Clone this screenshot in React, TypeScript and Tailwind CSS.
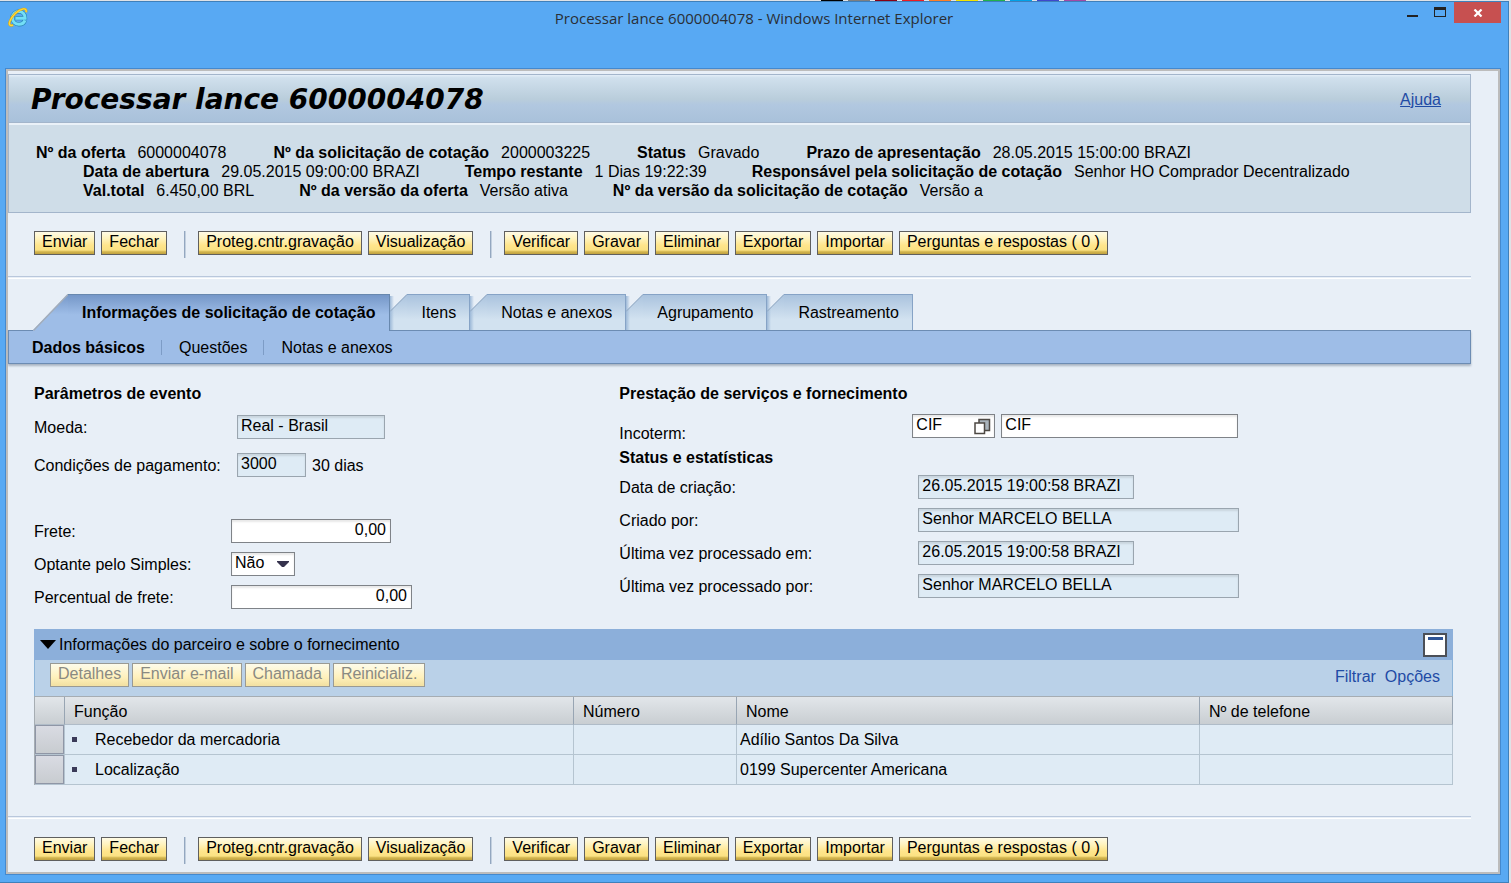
import { useState, type ReactNode } from 'react'
import clsx from 'clsx'

type InfoItem = { label: string; value: string }

const INFO_ROWS: InfoItem[][] = [
  [
    { label: 'Nº da oferta', value: '6000004078' },
    { label: 'Nº da solicitação de cotação', value: '2000003225' },
    { label: 'Status', value: 'Gravado' },
    { label: 'Prazo de apresentação', value: '28.05.2015 15:00:00 BRAZI' },
  ],
  [
    { label: 'Data de abertura', value: '29.05.2015 09:00:00 BRAZI' },
    { label: 'Tempo restante', value: '1 Dias 19:22:39' },
    { label: 'Responsável pela solicitação de cotação', value: 'Senhor HO Comprador Decentralizado' },
  ],
  [
    { label: 'Val.total', value: '6.450,00 BRL' },
    { label: 'Nº da versão da oferta', value: 'Versão ativa' },
    { label: 'Nº da versão da solicitação de cotação', value: 'Versão a' },
  ],
]

const ACTION_GROUPS = [
  ['Enviar', 'Fechar'],
  ['Proteg.cntr.gravação', 'Visualização'],
  ['Verificar', 'Gravar', 'Eliminar', 'Exportar', 'Importar', 'Perguntas e respostas ( 0 )'],
]

const TABS = ['Itens', 'Notas e anexos', 'Agrupamento', 'Rastreamento']
const SUB_TABS = ['Dados básicos', 'Questões', 'Notas e anexos']

const PARTNERS = [
  { role: 'Recebedor da mercadoria', name: 'Adílio Santos Da Silva' },
  { role: 'Localização', name: '0199 Supercenter Americana' },
]

const SWATCHES = [
  'bg-black',
  'bg-[#7f7f7f]',
  'bg-[#880015]',
  'bg-[#ed1c24]',
  'bg-[#ff7f27]',
  'bg-[#f5e500]',
  'bg-[#22b14c]',
  'bg-[#00a2e8]',
  'bg-[#3f48cc]',
  'bg-[#a349a4]',
]

function IeLogo() {
  return (
    <svg width="20" height="20" viewBox="0 0 20 20" fill="none" aria-hidden="true">
      <path d="M17 13.400c-1 2.500-3.200 3.900-6 3.900-3.900 0-6.600-2.600-6.600-6.300s2.700-6.400 6.600-6.400c3.800 0 6.200 2.600 6.100 6.600H7.500" stroke="#2b86b4" strokeWidth="4.200" />
      <path d="M17 13.400c-1 2.500-3.200 3.900-6 3.900-3.900 0-6.600-2.600-6.600-6.300s2.700-6.400 6.600-6.400c3.800 0 6.200 2.600 6.100 6.600H7.500" stroke="#74def6" strokeWidth="3" />
      <path d="M18 5.200c.7-2.300-.4-3.700-2.700-3.300C10 2.800 3.800 8.800 1.700 14.600c-1 3 .2 4.700 3.500 3.500" stroke="#d9a514" strokeWidth="2.400" />
      <path d="M18 5.200c.7-2.300-.4-3.700-2.700-3.300C10 2.800 3.800 8.800 1.700 14.600c-1 3 .2 4.700 3.500 3.500" stroke="#fbd83a" strokeWidth="1.400" />
    </svg>
  )
}

function TitleBar() {
  return (
    <header className="grid h-[66px] grid-cols-[1fr_auto_1fr] items-start">
      <div className="pt-[5px] pl-2">
        <IeLogo />
      </div>
      <div className="pt-[6px] font-['Open_Sans',sans-serif] text-[15px] leading-5 text-[#2a2f36]">
        Processar lance 6000004078 - Windows Internet Explorer
      </div>
      <div className="flex items-start justify-end pr-[7px]">
        <button aria-label="Minimizar" className="flex h-5 w-7 items-center justify-center">
          <svg width="12" height="12" viewBox="0 0 12 12">
            <path d="M1 9h11v2H1z" fill="#222" />
          </svg>
        </button>
        <button aria-label="Maximizar" className="flex h-5 w-7 items-center justify-center">
          <svg width="12" height="10" viewBox="0 0 12 10">
            <path d="M0 0h12v10H0zM1 3v6h10V3z" fill="#222" fillRule="evenodd" />
          </svg>
        </button>
        <button aria-label="Fechar janela" className="flex h-[21px] w-[47px] items-center justify-center bg-[#c75050]">
          <svg width="10" height="8" viewBox="0 0 10 8">
            <path d="M1.500 .5l7 7M8.500 .5l-7 7" stroke="#fff" strokeWidth="2.200" />
          </svg>
        </button>
      </div>
    </header>
  )
}

function ActionButton({ children, disabled }: { children: ReactNode; disabled?: boolean }) {
  return (
    <button
      disabled={disabled}
      className={clsx(
        'h-6 border px-[7px] pb-[2px] leading-4 whitespace-nowrap',
        disabled
          ? 'border-[#999a94] bg-linear-to-b from-[#fdfbea] from-0% via-[#fff1bc] via-60% to-[#f3e2a4] to-95% text-[#8a8a82]'
          : 'border-[#5f5f5f] bg-[linear-gradient(to_bottom,#fffbe6_0%,#fff3bd_30%,#ffe58c_60%,#fbe283_82%,#d2b44e_90%,#c0a240_100%)] text-black',
      )}
    >
      {children}
    </button>
  )
}

function ActionBar() {
  return (
    <div className="flex items-start pt-[18px] pl-[26px]">
      {ACTION_GROUPS.map((group, i) => (
        <div key={group[0]} className="flex items-start">
          {i > 0 && <span className="mr-3 ml-[17px] h-[27px] w-[2px] border-l border-[#93a7c0] bg-[#c3d0df]" />}
          <div className="flex gap-[6px]">
            {group.map((label) => (
              <ActionButton key={label}>{label}</ActionButton>
            ))}
          </div>
        </div>
      ))}
    </div>
  )
}

function Divider() {
  return <div className="h-[3px] border-t border-b border-t-[#b9c7dc] border-b-white" />
}

function PageHeader() {
  return (
    <section className="border border-[#a3b5cb]">
      <div className="flex h-12 items-center justify-between border-b border-[#a3b5cb] bg-[linear-gradient(to_bottom,#e3eef8_0%,#d0e0ed_6%,#b9cddb_52%,#b2c8e0_62%,#a9c1da_100%)] pt-[3px] pr-[29px] pl-[22px]">
        <h1 className="font-['DejaVu_Sans',Verdana,sans-serif] text-[28px] leading-9 font-bold italic">
          Processar lance 6000004078
        </h1>
        <a href="#ajuda" className="text-[#1f4ba5] underline">
          Ajuda
        </a>
      </div>
      <div className="border-t-2 border-[#eaf1f8] bg-[#cfdde8] pt-[18px] pb-3 pl-[27px] leading-[19px]">
        {INFO_ROWS.map((row, i) => (
          <dl key={row[0].label} className={clsx('flex', i === 0 ? 'gap-[47px]' : 'gap-[45px] pl-[47px]')}>
            {row.map((item) => (
              <div key={item.label} className="flex gap-3 whitespace-nowrap">
                <dt className="font-bold">{item.label}</dt>
                <dd>{item.value}</dd>
              </div>
            ))}
          </dl>
        ))}
      </div>
    </section>
  )
}

function Tabs() {
  const [subTab, setSubTab] = useState(0)

  return (
    <nav className="mt-[15px]">
      <div className="relative z-10 -mb-px flex items-start pl-[25px]">
        <button className="flex">
          <svg width="35" height="37" viewBox="0 0 35 37" aria-hidden="true">
            <defs>
              <linearGradient id="tab-active" x1="0" y1="0" x2="0" y2="37" gradientUnits="userSpaceOnUse">
                <stop offset="0" stopColor="#7597c8" />
                <stop offset=".55" stopColor="#9ebde7" />
              </linearGradient>
            </defs>
            <path d="M35 0L0 36v1h35z" fill="url(#tab-active)" />
            <path d="M35 .5L.5 36.500" stroke="#a3adba" strokeWidth="1.500" />
          </svg>
          <span className="h-[37px] border-t border-r border-[#6888ae] bg-[linear-gradient(to_bottom,#7597c8_0%,#9ebde7_55%)] px-[14px] leading-[35px] font-bold whitespace-nowrap">
            Informações de solicitação de cotação
          </span>
        </button>
        {TABS.map((label) => (
          <button key={label} className="flex">
            <svg width="17" height="36" viewBox="0 0 17 36" aria-hidden="true">
              <defs>
                <linearGradient id="tab-idle" x1="0" y1="0" x2="0" y2="36" gradientUnits="userSpaceOnUse">
                  <stop offset="0" stopColor="#aac3de" />
                  <stop offset=".7" stopColor="#d2e2f0" />
                </linearGradient>
                <linearGradient id="tab-shade" x1="0" y1="0" x2="4" y2="0" gradientUnits="userSpaceOnUse">
                  <stop offset="0" stopColor="#9db9d8" />
                  <stop offset="1" stopColor="#9db9d8" stopOpacity="0" />
                </linearGradient>
              </defs>
              <path d="M17 0L0 17v19h17z" fill="url(#tab-idle)" />
              <path d="M0 2h4v34H0z" fill="url(#tab-shade)" />
              <path d="M17 .5L0 17.500" stroke="#8fa6c0" />
            </svg>
            <span className="h-9 border-t border-r border-[#86a3c6] bg-[linear-gradient(to_bottom,#aac3de_0%,#d2e2f0_70%)] pr-[13px] pl-[14px] leading-[35px] whitespace-nowrap">
              {label}
            </span>
          </button>
        ))}
      </div>
      <div className="flex h-[34px] items-center border border-[#6c8cb3] bg-[#9ebde7] pt-px pl-[23px] shadow-[0_2px_2px_#a9b4c2]">
        {SUB_TABS.map((label, i) => (
          <div key={label} className="flex items-center">
            {i > 0 && <span className="mr-[17px] ml-4 h-[15px] w-px bg-[#7d9cc6]" />}
            <button onClick={() => setSubTab(i)} className={clsx('leading-5', subTab === i && 'font-bold')}>
              {label}
            </button>
          </div>
        ))}
      </div>
    </nav>
  )
}

const LABEL = 'pt-[2px] leading-5'
const HEADING = 'leading-[22px] font-bold'
const FIELD = 'h-6 border pr-1 pl-[3px] pb-[2px] leading-5 inset-shadow-[0_2px_2px_#00000018]'
const EDITABLE = 'border-[#7f8388] bg-white'
const READONLY = 'border-[#9aa5af] bg-[#deebf5]'

function EventParameters() {
  return (
    <section>
      <h2 className={HEADING}>Parâmetros de evento</h2>
      <div className="mt-[10px] flex items-center">
        <label htmlFor="moeda" className={clsx(LABEL, 'w-[203px]')}>Moeda:</label>
        <input id="moeda" readOnly defaultValue="Real - Brasil" className={clsx(FIELD, READONLY, 'w-[148px]')} />
      </div>
      <div className="mt-[14px] flex items-center">
        <label htmlFor="pagamento" className={clsx(LABEL, 'w-[203px]')}>Condições de pagamento:</label>
        <input id="pagamento" readOnly defaultValue="3000" className={clsx(FIELD, READONLY, 'w-[69px]')} />
        <span className={clsx(LABEL, 'ml-[6px]')}>30 dias</span>
      </div>
      <div className="mt-[42px] flex flex-col gap-[9px]">
        <div className="flex items-center">
          <label htmlFor="frete" className={clsx(LABEL, 'w-[197px]')}>Frete:</label>
          <input id="frete" defaultValue="0,00" className={clsx(FIELD, EDITABLE, 'w-[160px] text-right')} />
        </div>
        <div className="flex items-center">
          <label htmlFor="simples" className={clsx(LABEL, 'w-[197px]')}>Optante pelo Simples:</label>
          <div className="relative flex">
            <select id="simples" defaultValue="Não" className={clsx(FIELD, EDITABLE, 'w-16 appearance-none')}>
              <option>Não</option>
              <option>Sim</option>
            </select>
            <svg width="12" height="6" viewBox="0 0 12 6" className="pointer-events-none absolute top-[9px] right-[6px]">
              <path d="M0 0h12v1L7 6H5L0 1z" fill="#35324d" />
            </svg>
          </div>
        </div>
        <div className="flex items-center">
          <label htmlFor="percentual" className={clsx(LABEL, 'w-[197px]')}>Percentual de frete:</label>
          <input id="percentual" defaultValue="0,00" className={clsx(FIELD, EDITABLE, 'w-[181px] text-right')} />
        </div>
      </div>
    </section>
  )
}

const STATS = [
  { id: 'criacao', label: 'Data de criação:', value: '26.05.2015 19:00:58 BRAZI', width: 'w-[216px]' },
  { id: 'criado-por', label: 'Criado por:', value: 'Senhor MARCELO BELLA', width: 'w-[321px]' },
  { id: 'processado-em', label: 'Última vez processado em:', value: '26.05.2015 19:00:58 BRAZI', width: 'w-[216px]' },
  { id: 'processado-por', label: 'Última vez processado por:', value: 'Senhor MARCELO BELLA', width: 'w-[321px]' },
]

function ServiceAndStatus() {
  return (
    <section>
      <h2 className={HEADING}>Prestação de serviços e fornecimento</h2>
      <div className="mt-[9px] flex h-[30px] items-start">
        <label htmlFor="incoterm" className="w-[293px] self-end leading-5">Incoterm:</label>
        <div className="relative mr-[6px]">
          <input id="incoterm" defaultValue="CIF" className={clsx(FIELD, EDITABLE, 'w-[83px]')} />
          <button aria-label="Ajuda para entrada" className="absolute top-1 right-1">
            <svg width="17" height="17" viewBox="0 0 17 17" fill="none" stroke="#4d4843">
              <path d="M5 1.500h10.500v11H5z" fill="#a9b3bb" strokeWidth="1.500" />
              <path d="M1 5h9.500v10.500H1z" fill="#fff" strokeWidth="1.500" />
            </svg>
          </button>
        </div>
        <input aria-label="Descrição do incoterm" defaultValue="CIF" className={clsx(FIELD, EDITABLE, 'w-[237px]')} />
      </div>
      <h2 className={clsx(HEADING, 'mt-[3px]')}>Status e estatísticas</h2>
      <div className="mt-[6px] flex flex-col gap-[9px]">
        {STATS.map((stat) => (
          <div key={stat.id} className="flex items-center">
            <label htmlFor={stat.id} className={clsx(LABEL, 'w-[299px]')}>{stat.label}</label>
            <input id={stat.id} readOnly defaultValue={stat.value} className={clsx(FIELD, READONLY, stat.width)} />
          </div>
        ))}
      </div>
    </section>
  )
}

function PartnerPanel() {
  const th = 'h-7 border-r border-b border-r-[#98a5b3] border-b-[#b0bcc8] p-0 pt-[2px] pl-[9px] text-left font-normal'
  const td = 'h-[30px] border-r border-b border-[#b5c4d0] p-0'

  return (
    <section className="mt-5 mb-[31px]">
      <div className="flex h-[31px] items-center justify-between bg-[#8cafda] px-[6px]">
        <button className="flex items-center gap-[3px]">
          <svg width="16" height="9" viewBox="0 0 16 9" aria-hidden="true">
            <path d="M0 0h16L8 9z" fill="#000" />
          </svg>
          <span>Informações do parceiro e sobre o fornecimento</span>
        </button>
        <button aria-label="Minimizar painel" className="flex h-6 w-6 justify-center border-2 border-[#4b4f57] bg-white pt-[2px]">
          <svg width="15" height="3" viewBox="0 0 15 3">
            <path d="M0 0h15v3H0z" fill="#2f5597" />
          </svg>
        </button>
      </div>
      <div className="flex h-9 items-start justify-between border-x border-[#8cb4d8] bg-[#bad1e8] pt-[3px] pr-3 pl-[15px]">
        <div className="flex gap-[3px]">
          {['Detalhes', 'Enviar e-mail', 'Chamada', 'Reinicializ.'].map((label) => (
            <ActionButton key={label} disabled>{label}</ActionButton>
          ))}
        </div>
        <div className="flex gap-[9px] leading-7 text-[#1f4ba5]">
          <a href="#filtrar">Filtrar</a>
          <a href="#opcoes">Opções</a>
        </div>
      </div>
      <table className="w-full table-fixed border-separate border-spacing-0 border-t border-l border-[#a6adb3]">
        <thead>
          <tr className="bg-linear-to-b from-[#e2e6ea] to-[#c8cdd1]">
            <th className={clsx(th, 'w-[30px]')} aria-label="Seleção" />
            <th className={th}>Função</th>
            <th className={clsx(th, 'w-[163px]')}>Número</th>
            <th className={clsx(th, 'w-[463px]')}>Nome</th>
            <th className={clsx(th, 'w-[253px]')}>Nº de telefone</th>
          </tr>
        </thead>
        <tbody className="bg-[#dfebf5]">
          {PARTNERS.map((partner) => (
            <tr key={partner.role}>
              <td className={td}>
                <button
                  aria-label={`Selecionar ${partner.role}`}
                  className="block h-[29px] w-full border border-[#8f96a6] bg-linear-to-b from-[#d9dbe3] to-[#c8ccd0]"
                />
              </td>
              <td className={td}>
                <div className="flex items-center gap-[18px] pl-[7px]">
                  <span className="h-[5px] w-[5px] bg-[#3b3a58]" />
                  {partner.role}
                </div>
              </td>
              <td className={td} />
              <td className={clsx(td, 'pl-[3px]')}>{partner.name}</td>
              <td className={td} />
            </tr>
          ))}
        </tbody>
      </table>
    </section>
  )
}

export default function App() {
  return (
    <div className="flex min-h-screen flex-col bg-[#dfe2e6] pr-[2px] font-['Liberation_Sans',Arial,sans-serif] text-base leading-5 text-black">
      {/* Sliver of the window behind */}
      <div className="flex h-px gap-[5px] overflow-hidden pl-[821px]">
        {SWATCHES.map((color) => (
          <span key={color} className={clsx('h-px w-[22px] shrink-0', color)} />
        ))}
      </div>

      <div className="flex flex-1 flex-col border-t border-r border-b border-[#3f80ba] bg-[#58a9f3]">
        <TitleBar />
        <div className="mr-[7px] mb-[7px] ml-[5px] flex flex-1 border border-[#4489ce]">
          <main className="min-w-0 flex-1 border-2 border-[#bcbcbc] bg-[#e8eff7] pt-[3px] pr-[27px] pb-2">
            <PageHeader />
            <ActionBar />
            <div className="h-[18px]" />
            <Divider />
            <Tabs />
            <div className="pt-[19px] pr-[18px] pl-[26px]">
              <form className="grid grid-cols-[33fr_47fr]">
                <EventParameters />
                <ServiceAndStatus />
              </form>
              <PartnerPanel />
            </div>
            <Divider />
            <ActionBar />
          </main>
        </div>
      </div>
    </div>
  )
}
